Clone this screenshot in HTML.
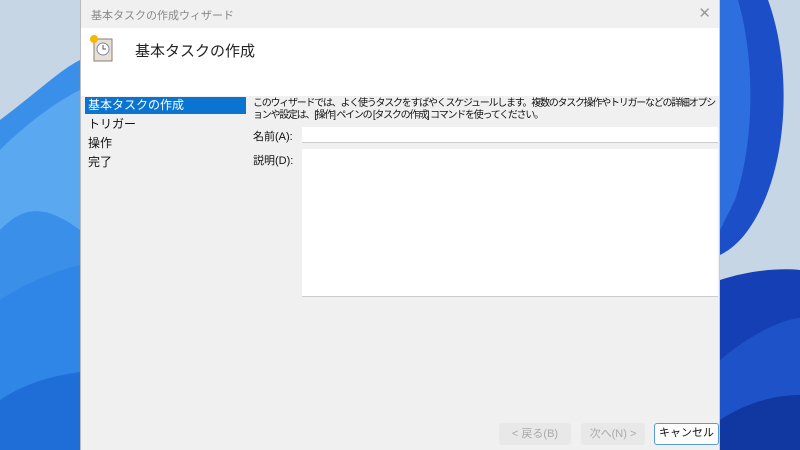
<!DOCTYPE html>
<html><head><meta charset="utf-8"><style>
*{margin:0;padding:0;box-sizing:border-box}
body{width:800px;height:450px;overflow:hidden;position:relative;background:#c6d6e5;font-family:"Liberation Sans","Noto Sans CJK JP",sans-serif;color:#111}
.bg{position:absolute;left:0;top:0}
.win{position:absolute;left:80px;top:0;width:640px;height:450px;background:#f0f0f0;border-left:1px solid #bbb;border-right:1px solid #ccc;overflow:hidden}
.title{position:absolute;left:10px;top:7px;font-size:11px;color:#888}
.x{position:absolute;right:8px;top:4px;font-size:15px;color:#999}
.head{position:absolute;left:0;top:28px;width:638px;height:68px;background:#fff}
.head h1{position:absolute;left:54px;top:12px;font-size:15px;font-weight:normal;color:#222}
.nav{position:absolute;left:4px;font-size:12px;width:161px;height:17px;line-height:17px;padding-left:3px}
.sel{background:#0a74d0;color:#fff}
.desc{position:absolute;left:172px;top:98px;font-size:10px;line-height:12px;letter-spacing:-1.25px;white-space:nowrap}
.lbl{position:absolute;left:172px;font-size:11px}
.inp{position:absolute;left:221px;width:416px;background:#fff;border-bottom:1px solid #ccc}
.btn{position:absolute;top:423px;height:22px;font-size:11px;text-align:center;line-height:22px;border-radius:3px;white-space:nowrap}
</style></head><body>
<svg class="bg" width="800" height="450">
<path d="M0 120 C40 90 60 70 80 60 L80 450 L0 450Z" fill="#3a8fe8"/>
<path d="M0 150 C30 120 60 100 80 90 L80 230 C40 200 20 210 0 230Z" fill="#5aa8f0"/>
<path d="M0 300 C30 280 60 270 80 265 L80 450 L0 450Z" fill="#2f86e6"/>
<path d="M0 400 C30 380 60 375 80 372 L80 450 L0 450Z" fill="#1f6ed8"/>
<path d="M720 0 L768 0 C790 60 790 150 760 210 C745 240 730 250 720 255Z" fill="#1c4fc7"/>
<path d="M720 0 L738 0 C755 60 755 140 735 200 L720 230Z" fill="#2e6fe0"/>
<path d="M720 280 C750 270 780 268 800 270 L800 450 L720 450Z" fill="#1540b5"/>
<path d="M720 360 C750 335 780 320 800 318 L800 450 L720 450Z" fill="#1e52c8"/>
<path d="M720 420 C750 400 780 395 800 395 L800 450 L720 450Z" fill="#1038a0"/>
</svg>
<div class="win">
<div class="title">基本タスクの作成ウィザード</div>
<div class="x">✕</div>
<div class="head">
<svg style="position:absolute;left:8px;top:6px" width="28" height="30">
<rect x="5" y="5" width="18" height="22" fill="#e8e0d6" stroke="#8a7f74"/>
<circle cx="14" cy="15" r="6" fill="#fff" stroke="#7a8aa0"/>
<path d="M14 11v4h3" stroke="#555" fill="none"/>
<circle cx="5" cy="5" r="4" fill="#f5b800"/>
</svg>
<h1>基本タスクの作成</h1>
</div>
<div class="nav sel" style="top:97px">基本タスクの作成</div>
<div class="nav" style="top:116px">トリガー</div>
<div class="nav" style="top:135px">操作</div>
<div class="nav" style="top:154px">完了</div>
<div class="desc">このウィザードでは、よく使うタスクをすばやくスケジュールします。複数のタスク操作やトリガーなどの詳細オプシ<br>ョンや設定は、[操作] ペインの [タスクの作成] コマンドを使ってください。</div>
<div class="lbl" style="top:128px">名前(A):</div>
<div class="inp" style="top:127px;height:16px"></div>
<div class="lbl" style="top:152px">説明(D):</div>
<div class="inp" style="top:149px;height:148px"></div>
<div class="btn" style="left:418px;width:72px;background:#e8e8e8;color:#aaa">&lt; 戻る(B)</div>
<div class="btn" style="left:500px;width:64px;background:#e8e8e8;color:#aaa">次へ(N) &gt;</div>
<div class="btn" style="left:573px;width:65px;background:#fdfdfd;border:1.5px solid #5a9ad8;color:#111;font-size:11px;line-height:19px">キャンセル</div>
</div>
</body></html>
